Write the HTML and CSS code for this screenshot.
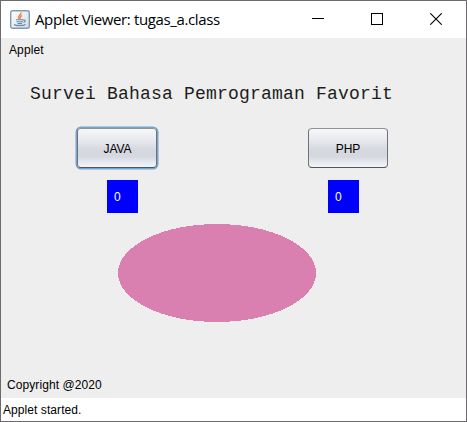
FILE: index.html
```html
<!DOCTYPE html>
<html lang="id">
<head>
<meta charset="utf-8">
<title>Applet Viewer: tugas_a.class</title>
<link rel="stylesheet" href="styles.css">
</head>
<body>
<div class="window">
  <header class="titlebar">
    <svg class="app-icon" width="20" height="19" viewBox="0 0 20 19">
      <defs><linearGradient id="tile" x1="0" y1="0" x2="1" y2="1"><stop offset="0" stop-color="#fff"/><stop offset="1" stop-color="#d5dce3"/></linearGradient></defs>
      <rect x=".7" y=".7" width="18.6" height="17.6" rx="2" fill="url(#tile)" stroke="#819bb3" stroke-width="1.4"/>
      <path d="M11 2.5c1 2-3.6 3-2.4 5.200.3.6 1 .8 1.200 1.300M12 5.500c-2.400 1.200-1.800 2-1.300 3" fill="none" stroke="#e98a45" stroke-width="1.500"/>
      <path d="M6 9.700h7.500M6.500 11.800h6.500M7.500 13.600h4.500M13.300 10.200c2.500-.8 2.500 1.500.3 2.200M4 14.500c2 1.600 9 1.600 11.500 0" fill="none" stroke="#6288a8" stroke-width="1.100"/>
    </svg>
    <span class="caption">Applet Viewer: tugas_a.class</span>
    <div class="controls">
      <svg width="12" height="12"><path d="M0 5.500h12" stroke="#000"/></svg>
      <svg width="12" height="12"><rect x=".5" y=".5" width="11" height="11" fill="none" stroke="#000"/></svg>
      <svg width="12" height="12"><path d="M.3.3l11.400 11.400M11.700.3L.3 11.700" stroke="#000" stroke-width="1.100"/></svg>
    </div>
  </header>
  <nav class="menubar"><span class="menu">Applet</span></nav>
  <main class="applet">
    <h1 class="heading">Survei Bahasa Pemrograman Favorit</h1>
    <div class="choices">
      <div class="choice">
        <button class="vote focused">JAVA</button>
        <output class="count java-count">0</output>
      </div>
      <div class="choice">
        <button class="vote">PHP</button>
        <output class="count php-count">0</output>
      </div>
    </div>
    <svg class="oval" width="198" height="98" shape-rendering="crispEdges"><ellipse cx="99" cy="49" rx="99" ry="49" fill="#d980b0"/></svg>
    <p class="copyright">Copyright @2020</p>
  </main>
  <footer class="status">Applet started.</footer>
</div>
</body>
</html>
```

FILE: styles.css
```css
* { box-sizing: border-box; }
body { margin: 0; overflow: hidden; font: 12px/16px "Liberation Sans", Arial, sans-serif; color: #000; }
.window { display: flex; flex-direction: column; width: 467px; height: 422px; border: 1px solid #6c6a6d; background: #eee; }
.titlebar { display: flex; align-items: center; height: 37px; padding: 0 24px 0 9px; background: #fff; }
.app-icon { flex: none; margin-right: 5px; margin-top: -1px; }
.caption { margin-top: -2px; font: 15px/20px "Open Sans", sans-serif; letter-spacing: -0.37px; white-space: nowrap; }
.controls { display: flex; gap: 47px; margin: -1px 0 0 auto; }
.controls svg { display: block; }
.menubar { height: 24px; padding: 4px 8px; }
.menu { display: block; letter-spacing: 0.1px; }
.applet { display: flex; flex-direction: column; flex: 1; padding: 22px 6px 5px; }
.heading { margin: 0 0 0 23px; font: 18px/20px "Liberation Mono", monospace; letter-spacing: 0.2px; white-space: nowrap; color: #1c1c1c; }
.choices { display: flex; gap: 151px; margin: 24px 0 0 70px; }
.choice { display: flex; flex-direction: column; gap: 12px; width: 80px; }
.vote { height: 40px; padding: 1px 0 0; border: 1px solid #6e7176; border-top-color: #929397; border-bottom-color: #50545b; border-radius: 4px; background: linear-gradient(#f7f7f9 0%, #e8e9ee 30%, #d6d8df 55%, #d5d8df 72%, #f2f5fa 100%); font: 12px/16px "Liberation Sans", Arial, sans-serif; color: #000; }
.focused { padding-left: 1px; box-shadow: 0 0 0 1.5px #74a4cf; }
.count { display: flex; align-items: center; width: 31px; height: 33px; padding-left: 7px; background: #00f; color: #fff; }
.java-count { margin-left: 30px; }
.php-count { margin-left: 20px; }
.oval { display: block; margin: 11px 0 0 111px; }
.copyright { margin: auto 0 0; letter-spacing: 0.08px; }
.status { height: 23px; padding: 4px 2px; background: #fff; letter-spacing: 0.07px; }
```
